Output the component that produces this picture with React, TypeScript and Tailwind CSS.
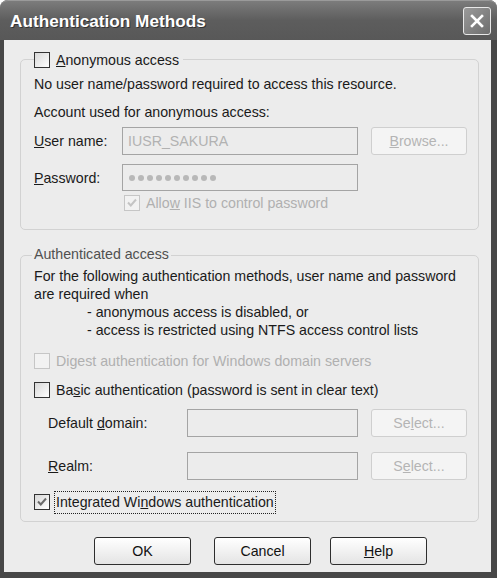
import React from "react";

function Check({ checked = false, disabled = false }: { checked?: boolean; disabled?: boolean }) {
  return (
    <span
      className={
        disabled
          ? "flex h-[16px] w-[16px] shrink-0 items-center justify-center border border-[#c6c6c6] bg-[#f2f2f2]"
          : "flex h-[16px] w-[16px] shrink-0 items-center justify-center border border-[#333] bg-gradient-to-br from-[#d8d8d8] to-white"
      }
    >
      {checked ? (
        <svg width="12" height="12" viewBox="0 0 12 12">
          <path
            d="M2 5.5 L4.8 8.5 L10 2.5"
            fill="none"
            stroke={disabled ? "#c4c4c4" : "#6a6a6a"}
            strokeWidth="2"
          />
        </svg>
      ) : null}
    </span>
  );
}

function DisabledButton({ children }: { children: React.ReactNode }) {
  return (
    <div className="flex h-[28px] w-[96px] shrink-0 items-center justify-center rounded-[3px] border border-[#cfcfcf] bg-[#f4f4f4] text-[#b4b4b4]">
      {children}
    </div>
  );
}

function Button({ children }: { children: React.ReactNode }) {
  return (
    <button className="flex h-[28px] w-[97px] shrink-0 items-center justify-center rounded-[3px] border border-[#2e2e2e] bg-gradient-to-b from-white to-[#e4e4e4] text-[#111]">
      {children}
    </button>
  );
}

function Field({ value, width }: { value?: React.ReactNode; width: string }) {
  return (
    <div className={`flex h-[28px] shrink-0 items-center border border-[#a4a4a4] bg-[#ececec] pl-[5px] text-[#b2b2b2] ${width}`}>
      {value}
    </div>
  );
}

export default function App() {
  return (
    <div className="h-[582px] w-[500px] bg-white font-['Liberation_Sans',Arial,sans-serif] text-[14.2px] leading-[18px] text-[#1a1a1a]">
      <div className="flex h-[578px] w-[497px] flex-col rounded-t-[8px] bg-[#474747]">
        {/* title bar */}
        <div className="flex h-[40px] shrink-0 items-center justify-between rounded-t-[8px] border-t border-[#9a9a9a] bg-gradient-to-b from-[#7c7c7c] via-[#5d5d5d] to-[#585858] pl-[10px] pr-[6px]">
          <span className="text-[17.2px] font-bold text-white [text-shadow:1px_1px_0_#333]">
            Authentication Methods
          </span>
          <div className="flex h-[28px] w-[28px] items-center justify-center rounded-[3px] border border-[#e8e8e8] bg-gradient-to-br from-[#9a9a9a] to-[#6e6e6e]">
            <svg width="16" height="16" viewBox="0 0 16 16">
              <path d="M3 3 L13 13 M13 3 L3 13" stroke="white" strokeWidth="2.6" strokeLinecap="square" />
            </svg>
          </div>
        </div>

        {/* body */}
        <div className="mb-[6px] ml-[4px] mr-[6px] flex flex-1 flex-col bg-[#ececec]">
          {/* Anonymous access */}
          <div className="relative ml-[16px] mt-[19px] h-[171px] w-[459px] rounded-[5px] border border-[#d2d2d2] pl-[13px] pt-[15px]">
            <div className="absolute left-[13px] top-[-9px] flex items-center gap-[6px] bg-[#ececec] pr-[4px]">
              <Check />
              <span>
                <span className="underline">A</span>nonymous access
              </span>
            </div>
            <div className="h-[18px]">No user name/password required to access this resource.</div>
            <div className="mt-[10px] h-[18px]">Account used for anonymous access:</div>
            <div className="mt-[6px] flex h-[28px] items-center">
              <span className="w-[88px]">
                <span className="underline">U</span>ser name:
              </span>
              <Field width="w-[236px]" value="IUSR_SAKURA" />
              <div className="ml-[13px]">
                <DisabledButton>
                  <span>
                    <span className="underline">B</span>rowse...
                  </span>
                </DisabledButton>
              </div>
            </div>
            <div className="mt-[9px] flex h-[27px] items-center">
              <span className="w-[88px]">
                <span className="underline">P</span>assword:
              </span>
              <div className="flex h-[27px] w-[236px] items-center gap-[3px] border border-[#a4a4a4] bg-[#ececec] pl-[6px]">
                {Array.from({ length: 10 }).map((_, i) => (
                  <span key={i} className="h-[6px] w-[6px] rounded-full bg-[#b8b8b8]" />
                ))}
              </div>
            </div>
            <div className="ml-[90px] mt-[4px] flex h-[16px] items-center gap-[6px] text-[#b0b0b0]">
              <Check checked disabled />
              <span>
                Allo<span className="underline">w</span> IIS to control password
              </span>
            </div>
          </div>

          {/* Authenticated access */}
          <div className="relative ml-[16px] mt-[25px] h-[267px] w-[459px] rounded-[5px] border border-[#d2d2d2] pl-[13px] pt-[11px]">
            <div className="absolute left-[11px] top-[-11px] bg-[#ececec] px-[2px] text-[#505050]">
              Authenticated access
            </div>
            <div>For the following authentication methods, user name and password</div>
            <div>are required when</div>
            <div className="pl-[53px]">- anonymous access is disabled, or</div>
            <div className="pl-[53px]">- access is restricted using NTFS access control lists</div>

            <div className="mt-[14px] flex h-[16px] items-center gap-[6px] text-[#b0b0b0]">
              <Check disabled />
              <span>Digest authentication for Windows domain servers</span>
            </div>
            <div className="mt-[13px] flex h-[16px] items-center gap-[6px]">
              <Check />
              <span>
                Ba<span className="underline">s</span>ic authentication (password is sent in clear text)
              </span>
            </div>

            <div className="mt-[11px] flex h-[28px] items-center pl-[14px]">
              <span className="w-[139px]">
                Default <span className="underline">d</span>omain:
              </span>
              <Field width="w-[171px]" />
              <div className="ml-[13px]">
                <DisabledButton>
                  <span>
                    Se<span className="underline">l</span>ect...
                  </span>
                </DisabledButton>
              </div>
            </div>
            <div className="mt-[15px] flex h-[28px] items-center pl-[14px]">
              <span className="w-[139px]">
                <span className="underline">R</span>ealm:
              </span>
              <Field width="w-[171px]" />
              <div className="ml-[13px]">
                <DisabledButton>
                  <span>
                    S<span className="underline">e</span>lect...
                  </span>
                </DisabledButton>
              </div>
            </div>

            <div className="mt-[14px] flex h-[16px] items-center gap-[4px]">
              <Check checked />
              <span className="border border-dotted border-[#222] px-[1px] leading-[21px]">
                Integrated Wi<span className="underline">n</span>dows authentication
              </span>
            </div>
          </div>

          {/* buttons */}
          <div className="mt-[15px] flex pl-[90px]">
            <Button>OK</Button>
            <div className="ml-[23px]">
              <Button>Cancel</Button>
            </div>
            <div className="ml-[19px]">
              <Button>
                <span>
                  <span className="underline">H</span>elp
                </span>
              </Button>
            </div>
          </div>
        </div>
      </div>
    </div>
  );
}
